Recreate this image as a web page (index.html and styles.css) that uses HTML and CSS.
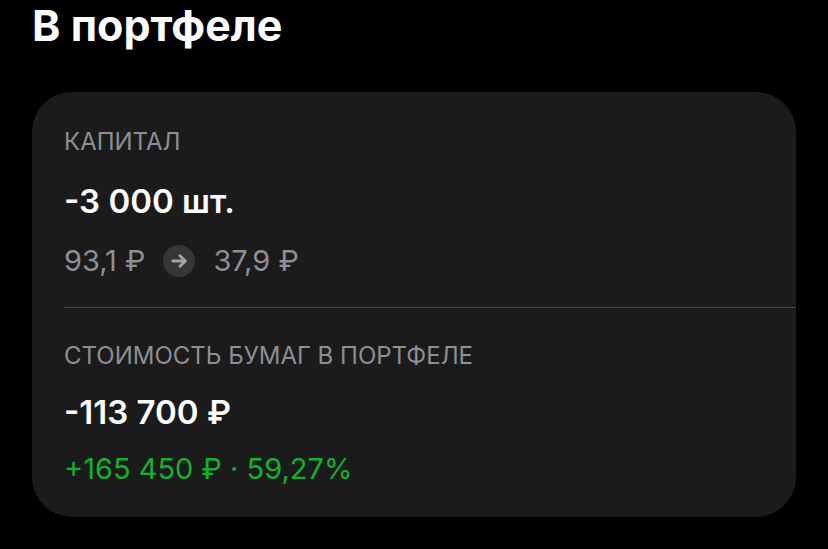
FILE: index.html
```html
<!DOCTYPE html>
<html lang="ru">
<head>
    <meta charset="UTF-8">
    <meta name="viewport" content="width=device-width, initial-scale=1.0">
    <title>В портфеле</title>
    <link rel="stylesheet" href="styles.css">
</head>
<body>
    <h1>В портфеле</h1>
    <div class="card">
        <section class="block">
            <h2 class="label">КАПИТАЛ</h2>
            <p class="value">-3 000 шт.</p>
            <p class="prices">
                <span>93,1 ₽</span>
                <svg class="arrow" viewBox="0 0 32 32" aria-hidden="true">
                    <circle cx="16" cy="16" r="16" fill="#363636"/>
                    <path d="M9.8 16H22M17 10.8L22.4 16L17 21.2" fill="none" stroke="#a3a3a8" stroke-width="2.8" stroke-linecap="round" stroke-linejoin="round"/>
                </svg>
                <span>37,9 ₽</span>
            </p>
        </section>
        <section class="block total">
            <h2 class="label">СТОИМОСТЬ БУМАГ В ПОРТФЕЛЕ</h2>
            <p class="value">-113 700 ₽</p>
            <p class="profit">+165 450 ₽ · 59,27%</p>
        </section>
    </div>
</body>
</html>
```
FILE: styles.css
```css
body {
    margin: 0;
    padding: 0 32px 32px;
    background-color: #000;
    color: #fcfcfc;
    font-family: Inter, "Liberation Sans", sans-serif;
}
h1, h2, p {
    margin: 0;
}
h1 {
    font-size: 43px;
    line-height: 50px;
    font-weight: 700;
}
.card {
    margin-top: 42px;
    padding: 2px 0 2px 32px;
    background-color: #1b1b1b;
    border-radius: 40px;
}
.block {
    display: flex;
    flex-direction: column;
    gap: 22px;
    padding: 31px 0 28px;
}
.total {
    gap: 19px;
    border-top: 1px solid #48484a;
}
.label {
    color: #8e8e95;
    font-size: 24px;
    line-height: 34px;
    font-weight: 400;
}
.value {
    font-size: 33px;
    line-height: 40px;
    font-weight: 600;
}
.prices, .profit {
    font-size: 29px;
    line-height: 36px;
}
.prices {
    display: flex;
    align-items: center;
    gap: 18px;
    color: #8e8e95;
}
.arrow {
    width: 32px;
    height: 32px;
}
.profit {
    color: #14b02f;
}
```
